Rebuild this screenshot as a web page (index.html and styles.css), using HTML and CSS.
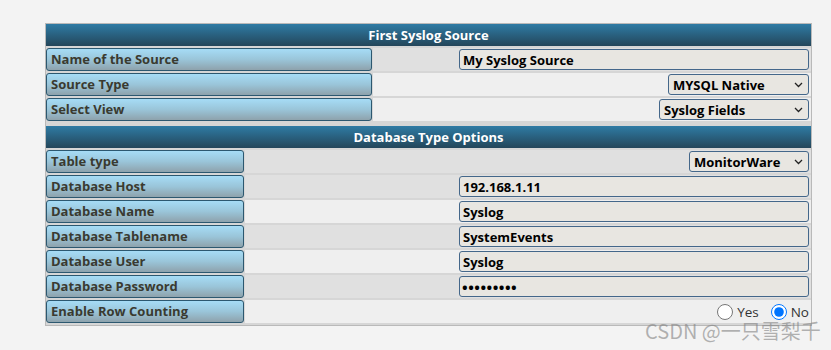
FILE: index.html
```html
<!DOCTYPE html>
<html lang="en">
  <head>
    <meta charset="UTF-8" />
    <meta name="viewport" content="width=device-width, initial-scale=1.0" />
    <title>Syslog Source</title>
    <link rel="stylesheet" href="styles.css">
  </head>
  <body>
    <div class="page">
      <div class="panel">
        <!-- First Syslog Source -->
        <div class="section" id="source-section">
          <div class="head">First Syslog Source</div>
          <div class="row">
            <div class="label">Name of the Source</div>
            <div class="value">
              <input class="field" type="text" value="My Syslog Source" />
            </div>
          </div>
          <div class="row">
            <div class="label">Source Type</div>
            <div class="value light">
              <span class="pick-wrap">
                <select class="pick pick-type">
                  <option>MYSQL Native</option>
                </select>
                <svg class="chevron" width="9" height="6" viewBox="0 0 9 6"><path d="M1 1l3.5 3.5L8 1" /></svg>
              </span>
            </div>
          </div>
          <div class="row">
            <div class="label">Select View</div>
            <div class="value light">
              <span class="pick-wrap">
                <select class="pick pick-view">
                  <option>Syslog Fields</option>
                </select>
                <svg class="chevron" width="9" height="6" viewBox="0 0 9 6"><path d="M1 1l3.5 3.5L8 1" /></svg>
              </span>
            </div>
          </div>
        </div>

        <!-- Database Type Options -->
        <div class="section db" id="db-section">
          <div class="head">Database Type Options</div>
          <div class="row">
            <div class="label">Table type</div>
            <div class="value">
              <span class="pick-wrap">
                <select class="pick pick-table">
                  <option>MonitorWare</option>
                </select>
                <svg class="chevron" width="9" height="6" viewBox="0 0 9 6"><path d="M1 1l3.5 3.5L8 1" /></svg>
              </span>
            </div>
          </div>
          <div class="row">
            <div class="label">Database Host</div>
            <div class="value">
              <input class="field" type="text" value="192.168.1.11" />
            </div>
          </div>
          <div class="row">
            <div class="label">Database Name</div>
            <div class="value light">
              <input class="field" type="text" value="Syslog" />
            </div>
          </div>
          <div class="row">
            <div class="label">Database Tablename</div>
            <div class="value">
              <input class="field" type="text" value="SystemEvents" />
            </div>
          </div>
          <div class="row">
            <div class="label">Database User</div>
            <div class="value light">
              <input class="field" type="text" value="Syslog" />
            </div>
          </div>
          <div class="row">
            <div class="label">Database Password</div>
            <div class="value">
              <input class="field secret" type="password" value="password1" />
            </div>
          </div>
          <div class="row">
            <div class="label">Enable Row Counting</div>
            <div class="value light">
              <label class="choice"><input type="radio" name="rowcount" />Yes</label>
              <label class="choice"><input type="radio" name="rowcount" checked />No</label>
            </div>
          </div>
        </div>
      </div>
      <div class="watermark">CSDN @一只雪梨千</div>
    </div>
  </body>
</html>
```

FILE: styles.css
```css
body {
  margin: 0;
  padding: 0;
  background: #f3f3f3;
  font-family: "Open Sans", "DejaVu Sans", sans-serif;
  color: #333;
}
.page {
  position: relative;
  padding: 23px 0 0 45px;
  height: 327px;
}
.panel {
  width: 765px;
  border: 1px solid #b9b9b9;
  background: #d6d6d6;
  padding-bottom: 2px;
}
.section.db {
  margin-top: 5px;
}
.head {
  height: 22px;
  line-height: 22px;
  text-align: center;
  color: #fff;
  font-weight: bold;
  font-size: 13px;
  background: linear-gradient(#2f7ba4, #24465a);
}
.row {
  display: flex;
  height: 23px;
  margin-top: 2px;
}
.label {
  box-sizing: border-box;
  width: 326px;
  padding-left: 4px;
  border: 1px solid #2c5870;
  border-radius: 3px;
  background: linear-gradient(#a6dcf6, #9ac5d9 50%, #8ea2ac);
  color: #3a3a30;
  font-weight: bold;
  font-size: 13px;
  line-height: 21px;
  white-space: nowrap;
}
.db .label {
  width: 198px;
}
.value {
  flex: 1;
  display: flex;
  justify-content: flex-end;
  align-items: center;
  padding-right: 2px;
  margin-left: 1px;
  background: #e0e0e0;
}
.value.light {
  background: #efefef;
}
.field,
.pick {
  box-sizing: border-box;
  height: 21px;
  border: 1px solid #44678a;
  border-radius: 3px;
  background: #e8e6e1;
  color: #000;
  font-family: "Open Sans", "DejaVu Sans", sans-serif;
  font-weight: bold;
  font-size: 13px;
}
.field {
  width: 350px;
  padding: 0 3px;
}
.field.secret {
  font-size: 15px;
  letter-spacing: 0.5px;
  padding-left: 2px;
}
.pick-wrap {
  position: relative;
  display: inline-flex;
}
.pick {
  appearance: none;
  padding: 0 4px;
}
.chevron {
  position: absolute;
  right: 6px;
  top: 8px;
  fill: none;
  stroke: #222;
  stroke-width: 1.3;
}
.pick-type {
  width: 141px;
}
.pick-view {
  width: 150px;
}
.pick-table {
  width: 120px;
}
.choice {
  display: flex;
  align-items: center;
  font-size: 13.5px;
  line-height: 16px;
  color: #333;
}
.choice + .choice {
  margin-left: 12px;
}
.choice input {
  width: 16px;
  height: 16px;
  margin: 0 4px 0 0;
}
.watermark {
  position: absolute;
  left: 645px;
  top: 322px;
  font-family: "Noto Sans CJK SC", sans-serif;
  font-size: 20px;
  line-height: 18px;
  color: rgba(130, 130, 130, 0.6);
  white-space: nowrap;
}
```
